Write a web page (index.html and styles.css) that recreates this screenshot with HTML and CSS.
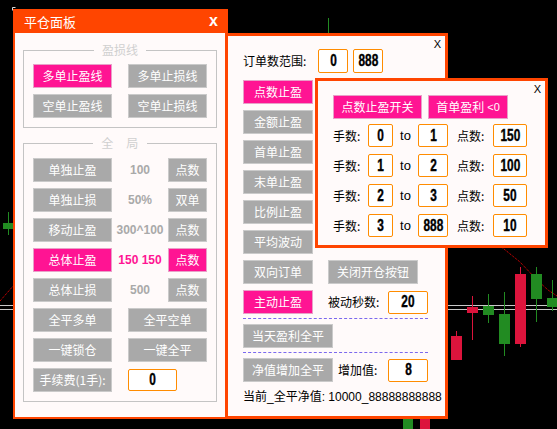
FILE: index.html
```html
<!DOCTYPE html>
<html lang="zh">
<head>
<meta charset="utf-8">
<title>平仓面板</title>
<link rel="stylesheet" href="styles.css">
</head>
<body>
<div class="screen">
  <svg class="chart" width="557" height="429" viewBox="0 0 557 429">
    <path d="M12.5 10.5V7.5H15.5" stroke="#d8d8d8" fill="none"/>
    <line x1="0" y1="305.5" x2="557" y2="305.5" stroke="#c8c8c8"/>
    <line x1="0" y1="309.5" x2="557" y2="309.5" stroke="#c8c8c8"/>
    <polyline points="0,301 14,285" stroke="#ff0000" fill="none" stroke-dasharray="1 1"/>
    <polyline points="496,243 504,249 520,262 537,280 548,290 557,296" stroke="#ff0000" fill="none" stroke-dasharray="1 1"/>
    <line x1="8.5" y1="212" x2="8.5" y2="235" stroke="#228b22"/>
    <rect x="3" y="223" width="10" height="6" fill="#228b22"/>
    <line x1="328.5" y1="18" x2="328.5" y2="34" stroke="#228b22"/>
    <line x1="456.5" y1="331" x2="456.5" y2="337" stroke="#dc143c"/>
    <rect x="451" y="336" width="11" height="24" fill="#dc143c"/>
    <line x1="472.5" y1="296" x2="472.5" y2="340" stroke="#dc143c"/>
    <rect x="467" y="307" width="11" height="6" fill="#dc143c"/>
    <line x1="488.5" y1="294" x2="488.5" y2="323" stroke="#228b22"/>
    <rect x="483" y="306" width="11" height="9" fill="#228b22"/>
    <line x1="504.5" y1="292" x2="504.5" y2="356" stroke="#228b22"/>
    <rect x="499" y="314" width="11" height="30" fill="#228b22"/>
    <line x1="520.5" y1="267" x2="520.5" y2="347" stroke="#dc143c"/>
    <rect x="515" y="274" width="11" height="70" fill="#dc143c"/>
    <line x1="536.5" y1="267" x2="536.5" y2="322" stroke="#228b22"/>
    <rect x="531" y="274" width="11" height="25" fill="#228b22"/>
    <line x1="552.5" y1="280" x2="552.5" y2="311" stroke="#228b22"/>
    <rect x="547" y="298" width="11" height="9" fill="#228b22"/>
    <rect x="403" y="418" width="10" height="11" fill="#228b22"/>
    <rect x="420" y="418" width="10" height="11" fill="#dc143c"/>
  </svg>

  <section class="win win-main">
    <header class="titlebar">
      <span class="title">平仓面板</span>
      <span class="close-b">x</span>
    </header>
    <div class="main-body">
      <fieldset class="group g1">
        <legend>盈损线</legend>
        <div class="pair">
          <div class="btn pink">多单止盈线</div>
          <div class="btn">多单止损线</div>
          <div class="btn">空单止盈线</div>
          <div class="btn">空单止损线</div>
        </div>
      </fieldset>
      <fieldset class="group g2">
        <legend class="spaced">全　局</legend>
        <div class="rows">
          <div class="r3"><div class="btn">单独止盈</div><span class="val">100</span><div class="btn">点数</div></div>
          <div class="r3"><div class="btn">单独止损</div><span class="val">50%</span><div class="btn">双单</div></div>
          <div class="r3"><div class="btn">移动止盈</div><span class="val">300^100</span><div class="btn">点数</div></div>
          <div class="r3"><div class="btn pink">总体止盈</div><span class="val pinktext">150 150</span><div class="btn pink">点数</div></div>
          <div class="r3"><div class="btn">总体止损</div><span class="val">500</span><div class="btn">点数</div></div>
          <div class="pair"><div class="btn">全平多单</div><div class="btn">全平空单</div></div>
          <div class="pair"><div class="btn">一键锁仓</div><div class="btn">一键全平</div></div>
          <div class="pair"><div class="btn">手续费(1手):</div><div class="inp fee"><b>0</b></div></div>
        </div>
      </fieldset>
    </div>
  </section>

  <section class="win win-order">
    <span class="x">X</span>
    <div class="range">
      <span class="lbl range-lbl">订单数范围:</span>
      <div class="inp w30"><b>0</b></div>
      <div class="inp w30 ml5"><b>888</b></div>
    </div>
    <div class="stack">
      <div class="btn w70 pink">点数止盈</div>
      <div class="btn w70">金额止盈</div>
      <div class="btn w70">首单止盈</div>
      <div class="btn w70">末单止盈</div>
      <div class="btn w70">比例止盈</div>
      <div class="btn w70">平均波动</div>
      <div class="line-row">
        <div class="btn w70">双向订单</div>
        <div class="btn w90">关闭开仓按钮</div>
      </div>
      <div class="line-row">
        <div class="btn w70 pink">主动止盈</div>
        <span class="lbl w60">被动秒数:</span>
        <div class="inp w40 h23"><b>20</b></div>
      </div>
    </div>
    <div class="dash"></div>
    <div class="btn w90 solo">当天盈利全平</div>
    <div class="dash"></div>
    <div class="line-row net-row">
      <div class="btn w90">净值增加全平</div>
      <span class="lbl w50 ml5">增加值:</span>
      <div class="inp w40 h23"><b>8</b></div>
    </div>
    <p class="equity">当前_全平净值: 10000_88888888888</p>
  </section>

  <section class="win win-pop">
    <span class="x">X</span>
    <div class="pop-btns">
      <div class="btn pink w89">点数止盈开关</div>
      <div class="btn pink w80">首单盈利 <small>&lt;0</small></div>
    </div>
    <div class="pop-rows">
      <div class="prow"><span class="lbl">手数:</span><div class="inp"><b>0</b></div><span class="to">to</span><div class="inp"><b>1</b></div><span class="lbl pl9">点数:</span><div class="inp"><b>150</b></div></div>
      <div class="prow"><span class="lbl">手数:</span><div class="inp"><b>1</b></div><span class="to">to</span><div class="inp"><b>2</b></div><span class="lbl pl9">点数:</span><div class="inp"><b>100</b></div></div>
      <div class="prow"><span class="lbl">手数:</span><div class="inp"><b>2</b></div><span class="to">to</span><div class="inp"><b>3</b></div><span class="lbl pl9">点数:</span><div class="inp"><b>50</b></div></div>
      <div class="prow"><span class="lbl">手数:</span><div class="inp"><b>3</b></div><span class="to">to</span><div class="inp"><b>888</b></div><span class="lbl pl9">点数:</span><div class="inp"><b>10</b></div></div>
    </div>
  </section>
</div>
</body>
</html>
```

FILE: styles.css
```css
* { box-sizing: border-box; }
html, body { margin: 0; padding: 0; }
body {
  background: #000;
  font-family: "Liberation Sans", "Noto Sans CJK SC", sans-serif;
  font-size: 12px;
}
.screen {
  position: relative;
  width: 557px;
  height: 429px;
  overflow: hidden;
  background: #000;
}
.chart { position: absolute; left: 0; top: 0; display: block; }

.win {
  position: absolute;
  background: #fffafa;
  border: 3px solid #ff4500;
}
.x {
  position: absolute;
  top: 3px;
  right: 4px;
  font-family: "Liberation Sans", sans-serif;
  font-size: 11px;
  line-height: 11px;
  color: #000;
}

/* main panel */
.win-main {
  left: 13px;
  top: 9px;
  width: 215px;
  height: 410px;
  border-width: 2px;
  display: flex;
  flex-direction: column;
}
.titlebar {
  height: 22px;
  flex: none;
  background: #ff4500;
  color: #fff;
  display: flex;
  align-items: center;
  justify-content: space-between;
  padding: 0 8px 0 9px;
}
.title {
  font-family: "Noto Sans CJK SC", sans-serif;
  font-size: 13px;
  line-height: 22px;
}
.close-b {
  font-family: "Liberation Sans", sans-serif;
  font-weight: bold;
  font-size: 16px;
  line-height: 16px;
  margin-top: -2px;
}
.main-body {
  padding: 10px 9px 0 8px;
}
.group {
  margin: 0;
  min-width: 0;
  border: 1px solid #c4c4c4;
  padding: 7px 9px 9px;
}
.group legend {
  margin: 0 auto;
  padding: 0 8px;
  color: #d0d0d0;
  font-family: "Noto Sans CJK SC", sans-serif;
  font-size: 12px;
  line-height: 14px;
}
.group legend.spaced { letter-spacing: 0.5px; }
.g2 { margin-top: 8px; padding-top: 8px; }

.pair {
  display: grid;
  grid-template-columns: 79px 79px;
  column-gap: 16px;
  row-gap: 6px;
  align-items: center;
}
.rows { display: flex; flex-direction: column; gap: 6px; }
.r3 {
  display: grid;
  grid-template-columns: 79px 1fr 39px;
  align-items: center;
}

.btn {
  height: 24px;
  display: flex;
  align-items: center;
  justify-content: center;
  background: #a9a9a9;
  border: 1px solid #cacaca;
  color: #fff;
  font-family: "Noto Sans CJK SC", sans-serif;
  font-size: 12px;
  line-height: 1;
  white-space: nowrap;
}
.btn.pink { background: #ff1493; border-color: #e8a0c8; }
.btn small { font-size: 11px; margin-left: 3px; font-family: "Liberation Sans", sans-serif; }

.val {
  text-align: center;
  font-family: "Liberation Sans", sans-serif;
  font-weight: bold;
  font-size: 12px;
  color: #a9a9a9;
}
.val.pinktext { color: #ff1493; }

.inp {
  height: 24px;
  display: flex;
  align-items: center;
  justify-content: center;
  background: #fff;
  border: 1px solid #ff8c00;
  border-radius: 2px;
  color: #000;
  font-family: "Liberation Sans", sans-serif;
  font-weight: bold;
  font-size: 16px;
  line-height: 1;
}
.inp b {
  display: inline-block;
  transform: scaleX(0.74);
  -webkit-text-stroke: 0.4px #000;
}
.inp.fee { width: 49px; height: 22px; }

.lbl {
  font-family: "Noto Sans CJK SC", sans-serif;
  font-size: 12px;
  line-height: 14px;
  color: #000;
  white-space: nowrap;
}

/* order panel */
.win-order {
  left: 225px;
  top: 33px;
  width: 223px;
  height: 386px;
  padding: 13px 0 0 15px;
}
.range { display: flex; align-items: center; }
.range-lbl { width: 75px; }
.w30 { width: 30px; }
.w40 { width: 40px; }
.w50 { width: 50px; }
.w60 { width: 60px; }
.w70 { width: 70px; }
.w80 { width: 80px; }
.w89 { width: 89px; }
.w90 { width: 90px; }
.h23 { height: 23px; }
.ml5 { margin-left: 5px; }
.pl9 { padding-left: 9px; }

.stack {
  margin-top: 7px;
  display: flex;
  flex-direction: column;
  gap: 6px;
}
.line-row { display: flex; align-items: center; }
.line-row .btn + .btn, .line-row .btn + .lbl.w60 { margin-left: 15px; }
.dash {
  width: 185px;
  margin-top: 4px;
  border-top: 1px dashed #7b68ee;
}
.solo { margin-top: 5px; margin-bottom: 0; }
.solo + .dash { margin-top: 4px; }
.net-row { margin-top: 5px; }
.equity {
  margin: 8px 0 0;
  font-family: "Liberation Sans", "Noto Sans CJK SC", sans-serif;
  font-size: 12px;
  line-height: 14px;
  color: #000;
  white-space: nowrap;
}

/* popup */
.win-pop {
  left: 315px;
  top: 78px;
  width: 233px;
  height: 170px;
  padding: 14px 0 0 15px;
}
.pop-btns { display: flex; gap: 6px; }
.pop-rows {
  margin-top: 5px;
  display: flex;
  flex-direction: column;
  gap: 7px;
}
.prow {
  display: grid;
  grid-template-columns: 35px 25px 25px 30px 45px 34px;
  align-items: center;
  height: 23px;
}
.prow .inp { height: 23px; }
.to {
  text-align: center;
  font-family: "Liberation Sans", sans-serif;
  font-size: 13px;
  color: #000;
}
```
